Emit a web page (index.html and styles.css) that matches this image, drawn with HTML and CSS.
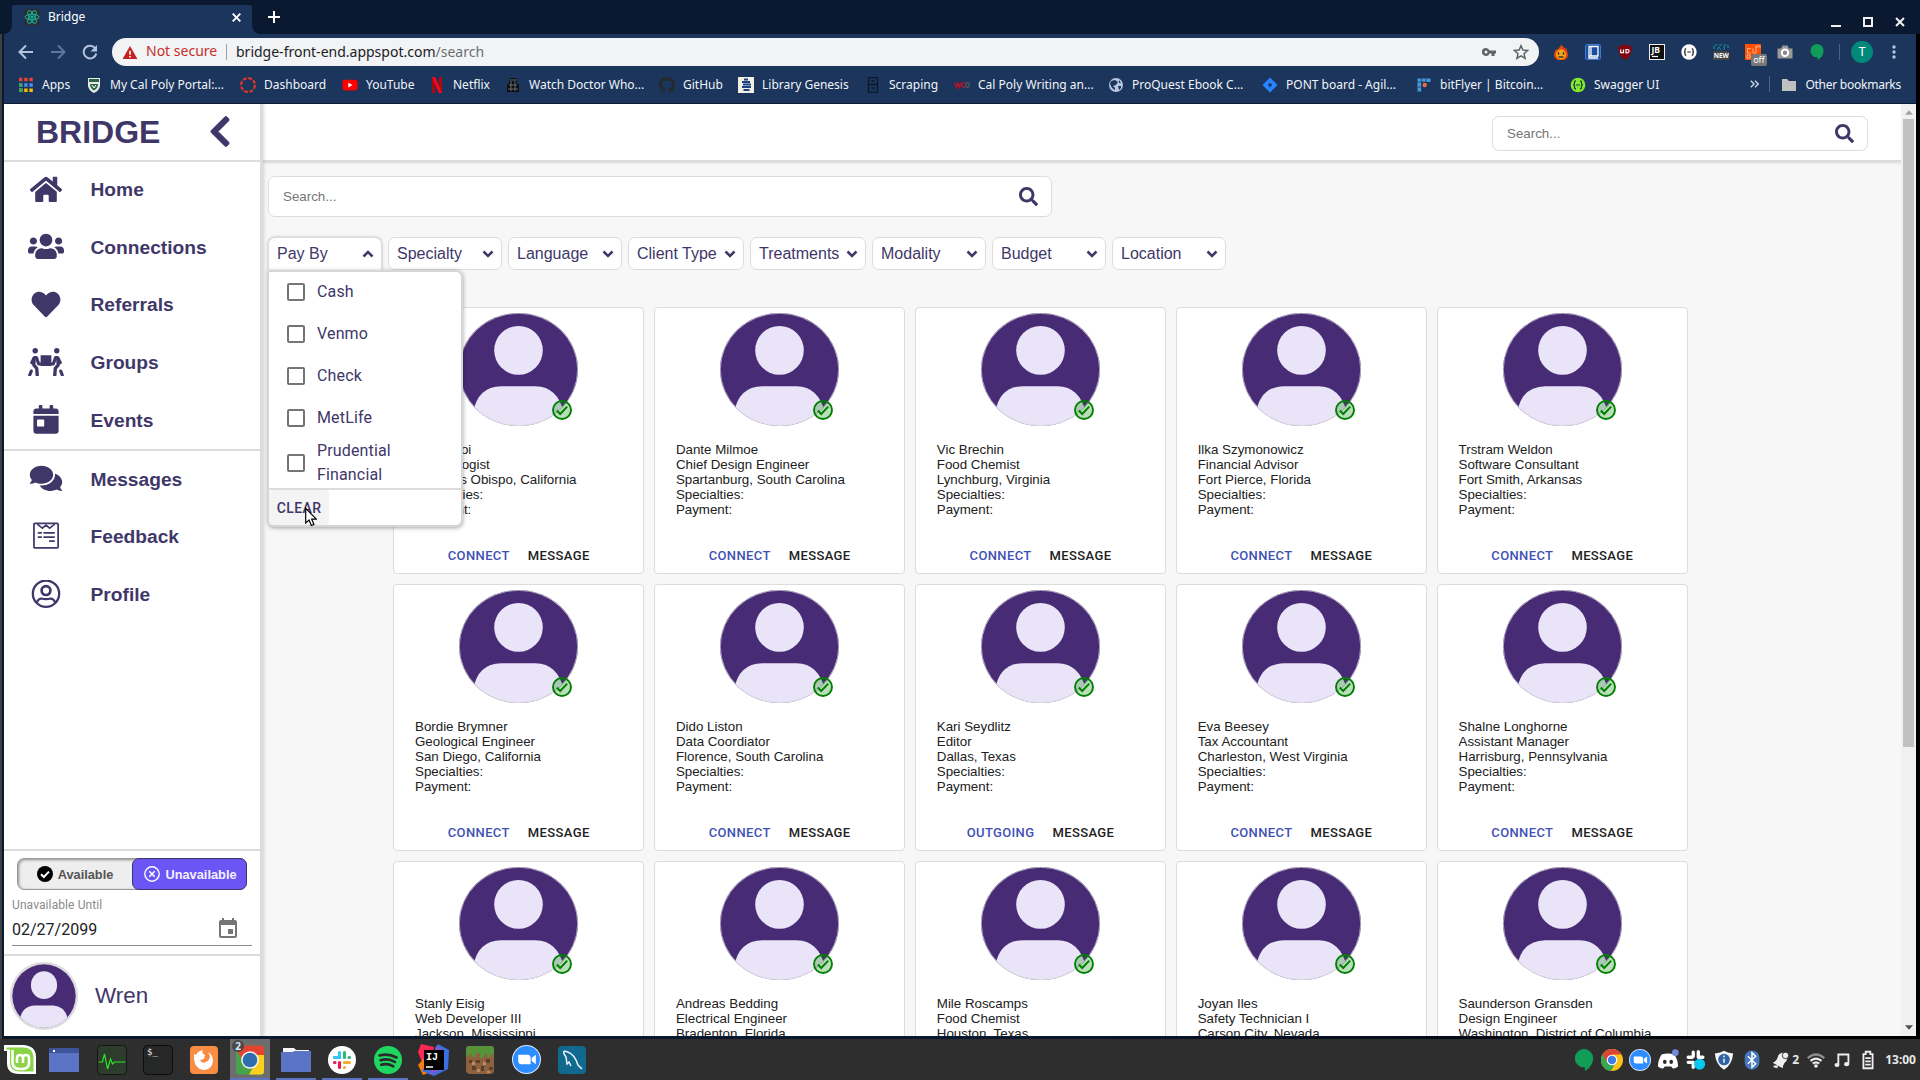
FILE: index.html
```html
<!DOCTYPE html>
<html lang="en">
<head>
<meta charset="utf-8">
<title>Bridge</title>
<link rel="stylesheet" href="styles.css">
</head>
<body>
<svg class="defs" width="0" height="0">
  <symbol id="avatar" viewBox="0 0 118 112" preserveAspectRatio="none">
    <clipPath id="avatar-clip"><ellipse cx="59" cy="56" rx="59" ry="56"/></clipPath>
    <g clip-path="url(#avatar-clip)">
      <rect width="118" height="112" fill="#482b75"/>
      <ellipse cx="59" cy="37" rx="24.1" ry="24.2" fill="#e9e4f8"/>
      <path d="M14 112V99Q18 73 42 72.500H76Q98 73 104 99V112Z" fill="#e9e4f8"/>
    </g>
    <ellipse cx="59" cy="56" rx="58.700" ry="55.700" fill="none" stroke="#d8d8dc" stroke-width=".7"/>
  </symbol>
  <symbol id="ok" viewBox="0 0 20 20"><circle cx="10" cy="10" r="9" fill="#008000" fill-opacity=".27" stroke="#008000" stroke-width="1.9"/><path d="M4.800 10.500l3.400 3.500 7-7.400" fill="none" stroke="#008000" stroke-width="2"/></symbol>
  <symbol id="search" viewBox="0 0 512 512"><path fill="#403769" d="M505 442.700L405.300 343c-4.500-4.500-10.600-7-17-7H372c27.600-35.300 44-79.700 44-128C416 93.100 322.900 0 208 0S0 93.100 0 208s93.100 208 208 208c48.300 0 92.700-16.400 128-44v16.300c0 6.400 2.500 12.500 7 17l99.700 99.700c9.400 9.400 24.600 9.400 33.900 0l28.300-28.300c9.400-9.400 9.400-24.600.1-34zM208 336c-70.700 0-128-57.200-128-128 0-70.700 57.200-128 128-128 70.700 0 128 57.200 128 128 0 70.700-57.200 128-128 128z"/></symbol>
  <symbol id="down" viewBox="0 0 12 8"><path d="M1.500 1.500L6 6l4.500-4.500" fill="none" stroke="#403769" stroke-width="2.500"/></symbol>
  <symbol id="chrome" viewBox="0 0 24 24">
    <circle cx="12" cy="12" r="12" fill="#fbc116"/>
    <path d="M12 12L1.600 6A12 12 0 0 0 11 24l5-9z" fill="#34a853"/>
    <path d="M12 12V6h10.400A12 12 0 0 0 1.600 6L7 15z" fill="#db4437"/>
    <circle cx="12" cy="12" r="5.800" fill="#fff"/><circle cx="12" cy="12" r="4.600" fill="#3f7ce8"/>
  </symbol>
  <symbol id="hang" viewBox="0 0 20 24"><path d="M10 0a10 10 0 0 1 10 10c0 6-4 11-9 14v-4h-1A10 10 0 0 1 10 0z" fill="#0f9d58"/></symbol>
  <symbol id="zoomcam" viewBox="0 0 28 28"><circle cx="14" cy="14" r="14" fill="#dcebff"/><circle cx="14" cy="14" r="13" fill="#2d8cff"/><path d="M6 9.500h9q3 0 3 3v6H9q-3 0-3-3zM19 12.500l4-3v9l-4-3z" fill="#fff"/></symbol>
</svg>

<div class="tabstrip">
  <div class="tab">
    <svg class="fav" viewBox="0 0 16 16"><rect width="16" height="16" fill="#2b2e36"/><g fill="none" stroke="#18b397" stroke-width="1"><ellipse cx="8" cy="8" rx="7" ry="2.700"/><ellipse cx="8" cy="8" rx="7" ry="2.700" transform="rotate(60 8 8)"/><ellipse cx="8" cy="8" rx="7" ry="2.700" transform="rotate(120 8 8)"/></g><circle cx="8" cy="8" r="1.500" fill="#18b397"/></svg>
    <span class="tab-title">Bridge</span>
    <svg class="tab-x" viewBox="0 0 9 9"><path d="M.7.7l7.600 7.600M8.300.7L.7 8.300" stroke="#fff" stroke-width="1.900"/></svg>
  </div>
  <svg class="newtab" viewBox="0 0 12 12"><path d="M6 0v12M0 6h12" stroke="#fff" stroke-width="2"/></svg>
  <div class="winctl">
    <svg viewBox="0 0 10 10"><path d="M0 9h10" stroke="#f0f0f0" stroke-width="2"/></svg>
    <svg viewBox="0 0 10 10"><path d="M1 1h8v8H1z" fill="none" stroke="#f0f0f0" stroke-width="2"/></svg>
    <svg viewBox="0 0 10 10"><path d="M1 1l8 8M9 1L1 9" stroke="#f0f0f0" stroke-width="2"/></svg>
  </div>
</div>

<div class="toolbar">
  <svg class="navbtn" viewBox="0 0 16 16"><path d="M15 8H2M8 1.500L1.500 8 8 14.500" fill="none" stroke="#b4c4de" stroke-width="2"/></svg>
  <svg class="navbtn" viewBox="0 0 16 16"><path d="M1 8h13M8 1.500L14.500 8 8 14.500" fill="none" stroke="#5e779f" stroke-width="2"/></svg>
  <svg class="navbtn" viewBox="0 0 16 16"><path d="M13.400 4.500A6.400 6.400 0 1 0 14.300 9.500" fill="none" stroke="#b4c4de" stroke-width="2"/><path d="M15 1v6.500H8.500z" fill="#b4c4de"/></svg>
  <div class="omnibox">
    <svg class="warn" viewBox="0 0 16 14"><path d="M8 0l8 14H0z" fill="#c5221f"/><path d="M8 5v4.500M8 10.700v1.700" stroke="#fff" stroke-width="1.700"/></svg>
    <span class="notsec">Not secure</span>
    <span class="url">bridge-front-end.appspot.com<i>/search</i></span>
    <svg class="key" viewBox="0 0 14 10"><path fill="#5f6368" fill-rule="evenodd" d="M4 1a4 4 0 1 0 3.600 5.500H9.500V9h3V6.500H14v-3H7.600A4 4 0 0 0 4 1zm0 2.500a1.500 1.500 0 1 1 0 3 1.500 1.500 0 0 1 0-3z"/></svg>
    <svg class="star" viewBox="0 0 16 16"><path d="M8 1.700l1.900 4.400 4.700.4-3.600 3.200 1.100 4.700L8 11.900l-4.100 2.500L5 9.700 1.400 6.500l4.700-.4z" fill="none" stroke="#5f6368" stroke-width="1.500"/></svg>
  </div>
  <div class="exts">
    <svg viewBox="0 0 16 16"><path d="M8 0c1 3 4 3 4 5l1.500-1c0 3 1.500 4 1.500 7a6 5 0 0 1-14 0c0-3 1.500-4 2-6l1.500 1C5 4 8 3 8 0z" fill="#e2440d"/><circle cx="8" cy="10.500" r="5" fill="#f7a418"/><path d="M5.500 8v3M10.500 8v3M5.500 13h5" stroke="#432" stroke-width="1.300"/></svg>
    <svg viewBox="0 0 16 16"><rect x=".5" y=".5" width="15" height="15" rx="1.500" fill="#1a4f9e" stroke="#3d7ad1"/><path d="M4 2.500h9v9.500H4zM4 12.500v1.500h9M6 3v9" fill="none" stroke="#fff" stroke-width="1.300"/></svg>
    <svg viewBox="0 0 16 16"><path d="M8 0q4 2.500 7 2.200Q15 12 8 16 1 12 1 2.200 4 2.500 8 0z" fill="#800610"/><path d="M3.700 5.500v3.200h2.800V5.500M9 5.500v3.300h1.200q2-.2 2-1.700t-2-1.600z" fill="none" stroke="#fff" stroke-width="1.200"/></svg>
    <svg viewBox="0 0 16 16"><rect x=".5" y=".5" width="15" height="15" fill="#111" stroke="#eee"/><text x="2.500" y="9" class="t-jb">JB</text><path d="M3 12.500h6" stroke="#fff" stroke-width="1.200"/></svg>
    <svg viewBox="0 0 16 16"><circle cx="8" cy="8" r="7.700" fill="#fff"/><path d="M5.200 4.500q-1.400 0-1.200 2T3 8q1.200 0 1 1.500t1.200 2M10.800 4.500q1.400 0 1.200 2T13 8q-1.200 0-1 1.500t-1.200 2M6.300 8h3.500" fill="none" stroke="#222" stroke-width="1.200"/></svg>
    <svg viewBox="0 0 16 16"><path d="M1 5V1h14v4" fill="none" stroke="#18919b" stroke-width="1.200" stroke-dasharray="3 1.500"/><path d="M4 6l2-3 2 3M11 2v4" stroke="#18919b" fill="none"/><rect y="7" width="16" height="9" fill="#444"/><text x=".7" y="14" class="t-new">NEW</text></svg>
    <span class="ext-cd"><svg viewBox="0 0 16 16"><rect width="16" height="16" fill="#ff5006"/><path d="M6 4.500H2.500v4.500H6M8 4.500v4.500h3V2M12 4V2h3v2M2 11h3v3H2z" fill="none" stroke="#f9b08a"/></svg><b>off</b></span>
    <svg viewBox="0 0 16 16"><path d="M.5 4.500h3.500l1.500-3h5l1.500 3h3.500V14.500H.5z" fill="#999"/><circle cx="8" cy="8.700" r="3.200" fill="#888" stroke="#fff" stroke-width="2"/></svg>
    <svg viewBox="0 0 20 24"><use href="#hang"/></svg>
  </div>
  <span class="tb-sep"></span>
  <span class="me">T</span>
  <svg class="dots" viewBox="0 0 4 14"><circle cx="2" cy="2" r="1.700" fill="#b4c4de"/><circle cx="2" cy="7" r="1.700" fill="#b4c4de"/><circle cx="2" cy="12" r="1.700" fill="#b4c4de"/></svg>
</div>

<div class="bookmarks">
  <div class="bm-list">
    <a><svg viewBox="0 0 16 16"><g stroke-width="3.400" stroke-dasharray="3.400 1.800"><path d="M1 2.500h14" stroke="#ea4335"/><path d="M1 8h14" stroke="#4a8cf4"/><path d="M1 13.300h14" stroke="#fbbc04"/></g><path d="M1 6.300h3.400v3.400H1zM1 11.600h3.400V15H1z" fill="#3aa757"/></svg>Apps</a>
    <a><svg viewBox="0 0 16 16"><path d="M2 1h12v8q-1 5-6 7-5-2-6-7z" fill="#e6ece5"/><path d="M3 2h10v3H3zM4 7h8q0 4-4 6.500Q4 11 4 7z" fill="#2d6447"/><path d="M6 8l2 3 2-3" stroke="#fff" fill="none"/></svg>My Cal Poly Portal:...</a>
    <a><svg viewBox="0 0 16 16"><circle cx="8" cy="8" r="6.900" fill="none" stroke="#e2372a" stroke-width="2.100" stroke-dasharray="3.900 1.520"/></svg>Dashboard</a>
    <a><svg viewBox="0 0 16 16"><rect x=".5" y="2.800" width="15" height="10.600" rx="2.400" fill="#f00"/><path d="M6.300 5.800v4.700L10.500 8.100z" fill="#fff"/></svg>YouTube</a>
    <a><svg viewBox="0 0 16 16"><path d="M3 0h3v16H3zM10 0h3v16h-3z" fill="#b1060f"/><path d="M3 0h3.200L13 16H9.800z" fill="#f00b18"/></svg>Netflix</a>
    <a><svg viewBox="0 0 16 16"><path d="M5 1h6l1 5 2 2v7H2V8l2-2z" fill="#0c0f14"/><path d="M5 3h6M4 8h8M3 12h10M6 4v10M10 4v10" stroke="#7d7e7c" stroke-width=".8"/></svg>Watch Doctor Who...</a>
    <a><svg viewBox="0 0 16 16"><path fill="#24292e" d="M8 0C3.580 0 0 3.580 0 8c0 3.540 2.290 6.530 5.470 7.590.4.070.55-.17.55-.38 0-.19-.01-.82-.01-1.490-2.010.37-2.530-.49-2.690-.94-.09-.23-.48-.94-.82-1.130-.28-.15-.68-.52-.01-.53.63-.01 1.080.58 1.230.82.72 1.210 1.870.87 2.330.66.070-.52.28-.87.51-1.070-1.780-.2-3.640-.89-3.640-3.950 0-.87.31-1.590.82-2.150-.08-.2-.36-1.020.08-2.120 0 0 .67-.21 2.200.82a7.600 7.600 0 0 1 4 0c1.530-1.040 2.200-.82 2.200-.82.44 1.100.16 1.920.08 2.120.51.56.82 1.270.82 2.150 0 3.070-1.870 3.750-3.650 3.950.29.25.54.73.54 1.480 0 1.070-.01 1.930-.01 2.200 0 .21.150.46.55.38A8 8 0 0 0 16 8c0-4.420-3.580-8-8-8z"/></svg>GitHub</a>
    <a><svg viewBox="0 0 16 16"><rect width="16" height="16" fill="#f1efe2"/><path d="M6 2.500h4M4 5h8M5 7.500h8M4 10h9M5.500 13h6" stroke="#1d4185" stroke-width="1.900"/></svg>Library Genesis</a>
    <a><svg viewBox="0 0 16 16"><path d="M3.500.7h9v14.600h-9zM3.500 7.500h9M6.500 4h3M6.500 11h3" fill="none" stroke="#0c172b" stroke-width="1.300"/></svg>Scraping</a>
    <a><svg viewBox="0 0 16 16"><path d="M.7 5.500L2.500 10.500 4 6l1.500 4.500L7 5.500M11 6q-3-1-3 2t3 2" fill="none" stroke="#b41328" stroke-width="1.400"/><ellipse cx="13.500" cy="8" rx="1.700" ry="2.200" fill="none" stroke="#4a5460" stroke-width="1.400"/></svg>Cal Poly Writing an...</a>
    <a><svg viewBox="0 0 16 16"><circle cx="8" cy="8" r="7" fill="#b8c6e2"/><path d="M3 4l4-1 3 2-2 3-3 1 2 2v2l-3-2-2-4zM10 9l3 0 0 2-2 2zM11 3l2 3h-2z" fill="#1b355c"/></svg>ProQuest Ebook C...</a>
    <a><svg viewBox="0 0 16 16"><path fill-rule="evenodd" d="M8 .5L15.500 8 8 15.500.5 8zM8 5.700L5.800 8 8 10.300 10.200 8z" fill="#2684ff"/></svg>PONT board - Agil...</a>
    <a><svg viewBox="0 0 16 16"><path d="M1.500 1.500h13v3.500h-9v9.500h-4z" fill="#4597da"/><path d="M1.500 5h9M5.500 1v13M10 1v4M1.500 10h4" stroke="#1b355c" stroke-width=".7"/><circle cx="8.700" cy="8" r="2.200" fill="#ee6a3c"/></svg>bitFlyer | Bitcoin...</a>
    <a><svg viewBox="0 0 16 16"><circle cx="8" cy="8" r="7.300" fill="#85ea2d"/><path d="M6 3.800q-1.700 0-1.500 2T3.200 8q1.500 0 1.300 2T6 12.200M10 3.800q1.700 0 1.500 2T12.800 8q-1.500 0-1.300 2T10 12.200M6 8h4" fill="none" stroke="#173647" stroke-width="1.200"/></svg>Swagger UI</a>
  </div>
  <svg class="more" viewBox="0 0 9 8"><path d="M.8.8L4 4 .8 7.200M5 .8L8.200 4 5 7.200" fill="none" stroke="#c9d3e5" stroke-width="1.400"/></svg>
  <span class="bm-sep"></span>
  <a class="other"><svg viewBox="0 0 16 16"><path d="M1 2h5l2 2h7v10H1z" fill="#c0c0c0"/></svg>Other bookmarks</a>
</div>

<div class="page">
  <aside class="sidebar">
    <div class="brand"><h1>BRIDGE</h1><svg viewBox="0 0 320 512"><path fill="#403769" stroke="#403769" stroke-width="14" d="M34.520 239.030L228.870 44.690c9.370-9.370 24.570-9.370 33.940 0l22.670 22.670c9.360 9.360 9.370 24.520.04 33.900L131.490 256l154.020 154.750c9.340 9.380 9.320 24.540-.04 33.900l-22.670 22.670c-9.370 9.370-24.570 9.370-33.940 0L34.520 272.970c-9.370-9.370-9.370-24.570 0-33.940z"/></svg></div>
    <nav class="nav top">
      <a><svg viewBox="0 0 576 512"><path d="M280.370 148.260L96 300.110V464a16 16 0 0 0 16 16l112.060-.29a16 16 0 0 0 15.920-16V368a16 16 0 0 1 16-16h64a16 16 0 0 1 16 16v95.640a16 16 0 0 0 16 16.050L464 480a16 16 0 0 0 16-16V300L295.670 148.260a12.190 12.190 0 0 0-15.300 0zM571.600 251.470L488 182.560V44.050a12 12 0 0 0-12-12h-56a12 12 0 0 0-12 12v72.610L318.470 43a48 48 0 0 0-61 0L4.340 251.470a12 12 0 0 0-1.600 16.900l25.500 31A12 12 0 0 0 45.150 301l235.220-193.740a12.190 12.190 0 0 1 15.300 0L530.900 301a12 12 0 0 0 16.900-1.600l25.500-31a12 12 0 0 0-1.700-16.930z"/></svg>Home</a>
      <a><svg viewBox="0 0 640 512"><path d="M96 224c35.300 0 64-28.700 64-64s-28.700-64-64-64-64 28.700-64 64 28.700 64 64 64zm448 0c35.300 0 64-28.700 64-64s-28.700-64-64-64-64 28.700-64 64 28.700 64 64 64zm32 32h-64c-17.600 0-33.500 7.100-45.100 18.600 40.300 22.100 68.900 62 75.100 109.400h66c17.700 0 32-14.300 32-32v-32c0-35.300-28.700-64-64-64zm-256 0c61.900 0 112-50.100 112-112S381.900 32 320 32 208 82.100 208 144s50.100 112 112 112zm76.800 32h-8.300c-20.800 10-43.900 16-68.500 16s-47.600-6-68.500-16h-8.300C179.600 288 128 339.600 128 403.200V432c0 26.500 21.500 48 48 48h288c26.500 0 48-21.500 48-48v-28.800c0-63.600-51.600-115.200-115.200-115.200zm-223.700-13.400C161.500 263.100 145.600 256 128 256H64c-35.300 0-64 28.700-64 64v32c0 17.700 14.300 32 32 32h65.900c6.300-47.400 34.900-87.300 75.200-109.400z"/></svg>Connections</a>
      <a><svg viewBox="0 0 512 512"><path d="M462.300 62.600C407.500 15.900 326 24.300 275.700 76.200L256 96.500l-19.700-20.300C186.100 24.300 104.500 15.900 49.700 62.600c-62.800 53.600-66.100 149.800-9.900 207.900l193.500 199.800c12.500 12.900 32.800 12.900 45.300 0l193.500-199.800c56.300-58.100 53-154.300-9.800-207.900z"/></svg>Referrals</a>
      <a><svg viewBox="0 0 640 512"><circle cx="128" cy="48" r="48"/><circle cx="512" cy="48" r="48"/><path d="M224 128h192v185q0 7-10 7H234q-10 0-10-7z"/><g fill="none" stroke="#403769" stroke-linecap="round" stroke-linejoin="round"><path d="M120 170l30 0 40 115h30M110 175l-44 85M520 170l-30 0-40 115h-30M530 175l44 85" stroke-width="56"/><path d="M110 185l-7 115 52 65 9 115M530 185l7 115-52 65-9 115" stroke-width="60"/><path d="M58 410l-27 70M582 410l27 70" stroke-width="56"/></g></svg>Groups</a>
      <a><svg viewBox="0 0 448 512"><path d="M0 464c0 26.500 21.500 48 48 48h352c26.500 0 48-21.500 48-48V192H0v272zm64-192c0-8.800 7.200-16 16-16h96c8.800 0 16 7.200 16 16v96c0 8.800-7.200 16-16 16H80c-8.800 0-16-7.200-16-16v-96zM400 64h-48V16c0-8.800-7.200-16-16-16h-32c-8.800 0-16 7.200-16 16v48H160V16c0-8.800-7.200-16-16-16h-32c-8.800 0-16 7.200-16 16v48H48C21.500 64 0 85.500 0 112v48h448v-48c0-26.500-21.500-48-48-48z"/></svg>Events</a>
    </nav>
    <nav class="nav">
      <a><svg viewBox="0 0 576 512"><path d="M416 192c0-88.400-93.100-160-208-160S0 103.600 0 192c0 34.300 14.100 65.900 38 92-13.400 30.200-35.500 54.200-35.800 54.500-2.200 2.300-2.800 5.700-1.500 8.700S4.800 352 8 352c36.600 0 66.900-12.300 88.700-25 32.200 15.700 70.300 25 111.300 25 114.900 0 208-71.600 208-160zm122 220c23.900-26 38-57.700 38-92 0-66.900-53.500-124.200-129.300-148.100.9 6.600 1.300 13.300 1.300 20.100 0 105.900-107.700 192-240 192-10.800 0-21.300-.8-31.700-1.900C207.800 439.600 281.800 480 368 480c41 0 79.100-9.200 111.300-25 21.800 12.700 52.100 25 88.700 25 3.200 0 6.100-1.900 7.300-4.800 1.300-2.900.7-6.300-1.500-8.700-.3-.3-22.400-24.200-35.800-54.500z"/></svg>Messages</a>
      <a><svg viewBox="0 0 28 28"><g fill="none" stroke="#403769" stroke-width="1.700"><rect x="2.300" y="1.300" width="23.500" height="23.800" rx="1"/><path d="M5.500 2l5 4L14 3l3.500 3 5-4" stroke-width="1.500"/><path d="M6 10.600h4M11.500 10.600h11M6 14.600h4M11.500 14.600h11M17 18.700h5.500"/></g></svg>Feedback</a>
      <a><svg viewBox="0 0 28 28"><g fill="none" stroke="#403769" stroke-width="2.200"><circle cx="14" cy="13.300" r="12.800"/><circle cx="14" cy="10.300" r="4.300" stroke-width="2.600"/><path d="M5 22q1.500-4 4.500-4 4.500 1.200 9 0 3 0 4.500 4"/></g></svg>Profile</a>
    </nav>
    <div class="status">
      <div class="toggle">
        <button class="avail"><svg viewBox="0 0 16 16"><circle cx="8" cy="8" r="8" fill="#000"/><path d="M4 8.300l2.800 2.700 5.200-5.400" fill="none" stroke="#fff" stroke-width="2"/></svg>Available</button>
        <button class="unavail"><svg viewBox="0 0 16 16"><circle cx="8" cy="8" r="7.200" fill="none" stroke="#fff" stroke-width="1.400"/><path d="M5.300 5.300l5.400 5.400M10.700 5.300l-5.400 5.400" stroke="#fff" stroke-width="1.600"/></svg>Unavailable</button>
      </div>
      <div class="until">Unavailable Until</div>
      <div class="date"><span>02/27/2099</span><svg viewBox="0 0 24 24"><path fill="#757575" d="M17 12h-5v5h5v-5zM16 1v2H8V1H6v2H5c-1.110 0-1.990.9-1.990 2L3 19c0 1.100.89 2 2 2h14c1.100 0 2-.9 2-2V5c0-1.100-.9-2-2-2h-1V1h-2zm3 18H5V8h14v11z"/></svg></div>
    </div>
    <div class="user"><span class="uava"><svg viewBox="0 0 118 112" preserveAspectRatio="none"><use href="#avatar"/></svg></span>Wren</div>
  </aside>

  <main class="main">
    <header class="topbar"><div class="searchbox small"><span>Search...</span><svg><use href="#search"/></svg></div></header>
    <div class="content">
      <div class="searchbox"><span>Search...</span><svg><use href="#search"/></svg></div>
      <div class="filters">
        <div class="filter open">Pay By<svg><use href="#down"/></svg>
          <div class="menu">
            <label><i></i>Cash</label><label><i></i>Venmo</label><label><i></i>Check</label><label><i></i>MetLife</label><label class="two"><i></i>Prudential Financial</label>
            <div class="menu-foot"><button>CLEAR</button></div>
          </div>
        </div>
        <div class="filter">Specialty<svg><use href="#down"/></svg></div>
        <div class="filter">Language<svg><use href="#down"/></svg></div>
        <div class="filter wide">Client Type<svg><use href="#down"/></svg></div>
        <div class="filter wide">Treatments<svg><use href="#down"/></svg></div>
        <div class="filter">Modality<svg><use href="#down"/></svg></div>
        <div class="filter">Budget<svg><use href="#down"/></svg></div>
        <div class="filter">Location<svg><use href="#down"/></svg></div>
      </div>
      <div class="cards">
        <article class="card"><div class="pic"><svg class="av"><use href="#avatar"/></svg><svg class="ok"><use href="#ok"/></svg></div><p>Diana Loi<br>Psychologist<br>San Luis Obispo, California<br>Specialties:<br>Payment:</p><div class="acts"><b>CONNECT</b><span>MESSAGE</span></div></article>
        <article class="card"><div class="pic"><svg class="av"><use href="#avatar"/></svg><svg class="ok"><use href="#ok"/></svg></div><p>Dante Milmoe<br>Chief Design Engineer<br>Spartanburg, South Carolina<br>Specialties:<br>Payment:</p><div class="acts"><b>CONNECT</b><span>MESSAGE</span></div></article>
        <article class="card"><div class="pic"><svg class="av"><use href="#avatar"/></svg><svg class="ok"><use href="#ok"/></svg></div><p>Vic Brechin<br>Food Chemist<br>Lynchburg, Virginia<br>Specialties:<br>Payment:</p><div class="acts"><b>CONNECT</b><span>MESSAGE</span></div></article>
        <article class="card"><div class="pic"><svg class="av"><use href="#avatar"/></svg><svg class="ok"><use href="#ok"/></svg></div><p>Ilka Szymonowicz<br>Financial Advisor<br>Fort Pierce, Florida<br>Specialties:<br>Payment:</p><div class="acts"><b>CONNECT</b><span>MESSAGE</span></div></article>
        <article class="card"><div class="pic"><svg class="av"><use href="#avatar"/></svg><svg class="ok"><use href="#ok"/></svg></div><p>Trstram Weldon<br>Software Consultant<br>Fort Smith, Arkansas<br>Specialties:<br>Payment:</p><div class="acts"><b>CONNECT</b><span>MESSAGE</span></div></article>
        <article class="card"><div class="pic"><svg class="av"><use href="#avatar"/></svg><svg class="ok"><use href="#ok"/></svg></div><p>Bordie Brymner<br>Geological Engineer<br>San Diego, California<br>Specialties:<br>Payment:</p><div class="acts"><b>CONNECT</b><span>MESSAGE</span></div></article>
        <article class="card"><div class="pic"><svg class="av"><use href="#avatar"/></svg><svg class="ok"><use href="#ok"/></svg></div><p>Dido Liston<br>Data Coordiator<br>Florence, South Carolina<br>Specialties:<br>Payment:</p><div class="acts"><b>CONNECT</b><span>MESSAGE</span></div></article>
        <article class="card"><div class="pic"><svg class="av"><use href="#avatar"/></svg><svg class="ok"><use href="#ok"/></svg></div><p>Kari Seydlitz<br>Editor<br>Dallas, Texas<br>Specialties:<br>Payment:</p><div class="acts"><b>OUTGOING</b><span>MESSAGE</span></div></article>
        <article class="card"><div class="pic"><svg class="av"><use href="#avatar"/></svg><svg class="ok"><use href="#ok"/></svg></div><p>Eva Beesey<br>Tax Accountant<br>Charleston, West Virginia<br>Specialties:<br>Payment:</p><div class="acts"><b>CONNECT</b><span>MESSAGE</span></div></article>
        <article class="card"><div class="pic"><svg class="av"><use href="#avatar"/></svg><svg class="ok"><use href="#ok"/></svg></div><p>Shalne Longhorne<br>Assistant Manager<br>Harrisburg, Pennsylvania<br>Specialties:<br>Payment:</p><div class="acts"><b>CONNECT</b><span>MESSAGE</span></div></article>
        <article class="card"><div class="pic"><svg class="av"><use href="#avatar"/></svg><svg class="ok"><use href="#ok"/></svg></div><p>Stanly Eisig<br>Web Developer III<br>Jackson, Mississippi</p></article>
        <article class="card"><div class="pic"><svg class="av"><use href="#avatar"/></svg><svg class="ok"><use href="#ok"/></svg></div><p>Andreas Bedding<br>Electrical Engineer<br>Bradenton, Florida</p></article>
        <article class="card"><div class="pic"><svg class="av"><use href="#avatar"/></svg><svg class="ok"><use href="#ok"/></svg></div><p>Mile Roscamps<br>Food Chemist<br>Houston, Texas</p></article>
        <article class="card"><div class="pic"><svg class="av"><use href="#avatar"/></svg><svg class="ok"><use href="#ok"/></svg></div><p>Joyan Iles<br>Safety Technician I<br>Carson City, Nevada</p></article>
        <article class="card"><div class="pic"><svg class="av"><use href="#avatar"/></svg><svg class="ok"><use href="#ok"/></svg></div><p>Saunderson Gransden<br>Design Engineer<br>Washington, District of Columbia</p></article>
      </div>
    </div>
  </main>
  <div class="scroll"><svg viewBox="0 0 9 5"><path d="M0 5L4.500 0 9 5z" fill="#a3a3a3"/></svg><span></span><svg class="dn" viewBox="0 0 9 5"><path d="M0 0l4.500 5L9 0z" fill="#505050"/></svg></div>
</div>

<div class="taskbar">
  <div class="apps">
    <span><svg viewBox="0 0 32 32"><path d="M0 1h20q12 1 12 12v17H15Q3 30 3 19V7H0z" fill="#fff"/><path d="M2.500 3.500h17q10 .5 10 10v14H15Q6 27 6 19V5.500H2.500z" fill="#8bd346"/><path d="M8.500 6v12q0 7 7 7H19q6-.5 6-6v-5q-.2-3-3-3t-3 3v5M19 14q-.2-3-3-3t-3 3v5" fill="none" stroke="#fff" stroke-width="2.600"/></svg></span>
    <span class="files"><svg viewBox="0 0 32 32"><rect x="1" y="4" width="30" height="24" fill="#5b74c5"/><rect x="1" y="4" width="30" height="5" fill="#3d549b"/><rect x="5" y="6" width="2" height="2" fill="#fff"/></svg></span>
    <span><svg viewBox="0 0 32 32"><rect x="1.500" y="1.500" width="29" height="29" rx="4" fill="#2d3c2b" stroke="#141814"/><path d="M2.500 18h4l2-8 3 15 3-10 2 5 2-2h11" fill="none" stroke="#2ee52e" stroke-width="1.200"/></svg></span>
    <span><svg viewBox="0 0 32 32"><rect x="1.500" y="1.500" width="29" height="29" rx="4" fill="#262828" stroke="#0c0c0c"/><text x="5" y="11" class="t-term">$_</text></svg></span>
    <span><svg viewBox="0 0 32 32"><rect x="2" y="2" width="28" height="28" rx="4" fill="#f88c42"/><path d="M6 10l2 1q2-4 7-5-2 3 2 5l-1 4-4 1q2 4 6 2t4-6l-2-4q5 3 5 9-1 9-10 9Q5 24 6 10z" fill="#fff"/></svg></span>
    <span class="on run"><svg viewBox="0 0 32 32"><path d="M5 1.500h22a3 3 0 0 1 3 3v23a3 3 0 0 1-3 3H5a3 3 0 0 1-3-3v-23a3 3 0 0 1 3-3z" fill="#48a24a"/><path d="M2 5q0-3.500 3-3.500h22q3 0 3 3.500v6H16l-6 8-8-14z" fill="#e44332"/><path d="M30 11v16q0 3.500-3 3.500H15l8-14V11z" fill="#fcd11c"/><circle cx="16" cy="16" r="8.800" fill="#f2f2f2"/><circle cx="16" cy="16" r="7.300" fill="#2e6eae"/></svg><em>2</em></span>
    <span class="run"><svg viewBox="0 0 32 32"><path d="M3 4h11l2 2h13v5H3z" fill="#f7f7f7"/><path d="M1 8h11l3-1h16v21H1z" fill="#5b74c5"/></svg></span>
    <span class="run"><svg viewBox="0 0 32 32"><circle cx="16" cy="16" r="14" fill="#fff"/><g stroke-width="3.200" stroke-linecap="round"><path d="M13.500 8.500v5M8.500 13.500h0" stroke="#36c5f0"/><path d="M8.500 13.500h5" stroke="#36c5f0"/><path d="M18.500 8.500v5M23.500 13.500h-.5" stroke="#2eb67d"/><path d="M18.500 18.500h5M18.500 23.500v0" stroke="#ecb22e"/><path d="M13.500 18.500v5M8.500 18.500h.5" stroke="#e01e5a"/></g></svg></span>
    <span class="run"><svg viewBox="0 0 32 32"><circle cx="16" cy="16" r="14" fill="#1ed760"/><path d="M7.500 11.500q9-2.500 17 2M8.500 16.200q8-2.200 14.500 1.800M9.300 20.800q6.500-1.800 12 1.500" fill="none" stroke="#2b2b2b" stroke-width="2.600" stroke-linecap="round"/></svg></span>
    <span><svg viewBox="0 0 32 32"><path d="M3 0l13 3-2 9L4 18 0 8z" fill="#fe2857"/><path d="M0 21l8-9 8 15-11 4z" fill="#f97a12"/><path d="M20 0l11 6-1 19-14 7-12-5z" fill="#3b6fe4"/><path d="M18 2l8 4-4 20-10 5z" fill="#8756c8"/><rect x="6" y="6" width="20" height="20" fill="#000"/><text x="8" y="16" class="t-ij">IJ</text><path d="M8 23h7" stroke="#fff" stroke-width="1.500"/></svg></span>
    <span><svg viewBox="0 0 32 32"><rect x="2" y="2" width="28" height="28" rx="4" fill="#8c6240"/><path d="M2 5q0-3 3-3h22q3 0 3 3v5h-3v3h-4v-3h-3v4h-4v-5h-4v4H8v-3H5v2H2z" fill="#569238"/><path d="M5 16h3v3H5zM12 16h4v3h-4zM22 15h4v4h-4zM8 22h4v4H8zM17 22h3v5h-3zM25 23h4v3h-4z" fill="#5e3e27"/><path d="M8 18h3v3H8zM19 18h3v3h-3zM13 25h3v3h-3zM23 27h3v2h-3z" fill="#bb8b66"/></svg></span>
    <span><svg viewBox="0 0 28 28" class="zoomapp"><use href="#zoomcam"/></svg></span>
    <span><svg viewBox="0 0 32 32"><rect x="2" y="2" width="28" height="28" rx="4" fill="#12698f"/><path d="M8 7q8 1 12 9l2 5 4 4M8 7q-1 2 2 6l1 7 2-2 2 4" fill="none" stroke="#e8f4fa" stroke-width="1.500"/></svg></span>
  </div>
  <div class="tray">
    <svg viewBox="0 0 20 24"><use href="#hang"/></svg>
    <svg viewBox="0 0 24 24"><use href="#chrome"/></svg>
    <svg viewBox="0 0 28 28"><use href="#zoomcam"/></svg>
    <svg viewBox="0 0 24 24"><path d="M5 6q7-2 14 0 4 6 4 13-4 3-6 2l-1.500-2h-7L7 21q-2 1-6-2Q1 12 5 6z" fill="#fff"/><ellipse cx="8.500" cy="14" rx="2" ry="2.400" fill="#2d2d2d"/><ellipse cx="15.500" cy="14" rx="2" ry="2.400" fill="#2d2d2d"/><circle cx="20" cy="4" r="3.600" fill="#7289da"/></svg>
    <svg viewBox="0 0 24 24"><g stroke="#fff" stroke-width="3.600" stroke-linecap="round"><path d="M9 3.500v4.500M3.500 9h4.500M14.500 3v6M14.500 9h5M3.500 14.500h5.500M9 15v5"/></g><circle cx="16" cy="16.500" r="6" fill="#00c8ee"/></svg>
    <svg viewBox="0 0 24 24"><path d="M12 2q5 3 10 2.500Q21 17 12 22.500 3 17 2 4.500 7 5 12 2z" fill="#f4f4f4"/><circle cx="12" cy="11.500" r="6.300" fill="#2e64a5"/><path d="M12 10.500v4.500M12 7v2" stroke="#dfe8f3" stroke-width="1.800"/></svg>
    <svg viewBox="0 0 24 24"><rect x="4" y="1.500" width="16" height="21" rx="8" fill="#4579bd"/><path d="M7.500 8l8.500 8-4 4V4l4 4-8.500 8" fill="none" stroke="#fff" stroke-width="1.600"/></svg>
    <svg viewBox="0 0 24 24"><path d="M4 15q5-2 6-8 4-5 8-1 4 5-1 9-2 3-2 6zM5 18h5l-1 3-4-1z" fill="#eee"/><circle cx="18" cy="7" r="3.500" fill="#eee" stroke="#2d2d2d"/></svg>
    <span class="n2">2</span>
    <svg viewBox="0 0 24 24"><g fill="none" stroke="#eee" stroke-width="2.400"><path d="M3 10q9-8 18 0" opacity=".5"/><path d="M6 13q6-5 12 0M8.500 16q3.500-3 7 0"/></g><circle cx="12" cy="18.500" r="2" fill="#eee"/></svg>
    <svg class="tight" viewBox="0 0 24 24"><path d="M8 17V6h11v10" fill="none" stroke="#eee" stroke-width="2"/><ellipse cx="6.500" cy="17.500" rx="2.700" ry="2.200" fill="#eee"/><ellipse cx="17" cy="16.500" rx="2.700" ry="2.200" fill="#eee"/></svg>
    <svg class="tight" viewBox="0 0 24 24"><path d="M7 5.500h2.500V3h5v2.500H17V21H7z" fill="none" stroke="#eee" stroke-width="2"/><path d="M9 10h6M9 13.500h6M9 17h6" stroke="#eee" stroke-width="1.800"/></svg>
    <span class="clock">13:00</span>
  </div>
</div>
<svg class="cursor" viewBox="0 0 12 19"><path d="M.7.9v14.600l3.400-3 2.200 5.500 2.600-1-2.200-5.300h4.600z" fill="#fff" stroke="#000" stroke-width="1.200"/></svg>
</body>
</html>
```
FILE: styles.css
```css
* { box-sizing: border-box; }
body {
  margin: 0; width: 1920px; height: 1080px; overflow: hidden;
  background: linear-gradient(90deg, #3c4043 2px, #0a1930 2px, #0a1930 1000px, #000 1900px);
  display: flex; flex-direction: column;
  font-family: "Liberation Sans", Arial, sans-serif;
}
svg { display: block; flex: none; }
.defs { position: absolute; }
button { font-family: inherit; margin: 0; }

/* browser chrome */
.tabstrip { height: 34px; flex: none; background: #0a1930; display: flex; align-items: flex-end; padding-left: 12px; }
.tab {
  width: 240px; height: 29px; background: #1b355c; border-radius: 2px 2px 0 0; position: relative;
  display: flex; align-items: center; padding: 0 11px 5px 12px; color: #fff;
  font: 12px "Noto Sans", sans-serif;
}
.tab::before, .tab::after { content: ""; position: absolute; bottom: 0; width: 8px; height: 8px; }
.tab::before { left: -8px; background: radial-gradient(circle at 0 0, transparent 7.500px, #1b355c 8px); }
.tab::after { right: -8px; background: radial-gradient(circle at 100% 0, transparent 7.500px, #1b355c 8px); }
.fav { width: 16px; height: 16px; }
.tab-title { margin-left: 8px; flex: 1; padding-bottom: 2px; }
.tab-x { width: 9px; height: 9px; }
.newtab { width: 12px; height: 12px; margin: 0 0 11px 16px; }
.winctl { margin-left: auto; display: flex; gap: 22px; padding: 0 15px 7px 0; }
.winctl svg { width: 10px; height: 10px; }

.toolbar { height: 36px; flex: none; background: #1b355c; border-left: 2px solid #0a1930; margin: 0 4px 0 2px; display: flex; align-items: center; padding: 0 0 0 14px; }
.navbtn { width: 16px; height: 16px; margin-right: 16px; }
.omnibox { width: 1427px; height: 28px; margin-left: -2px; border-radius: 14px; background: #f1f3f4; display: flex; align-items: center; padding: 0 10px; font: 14px "Noto Sans", sans-serif; }
.warn { width: 16px; height: 13px; }
.notsec { color: #c5302a; margin-left: 8px; width: 81px; border-right: 1px solid #9aa0a6; line-height: 14px; padding-bottom: 2px; white-space: nowrap; }
.url { margin-left: 9px; color: #202124; flex: 1; padding-bottom: 2px; }
.url i { font-style: normal; color: #6b6f74; }
.key { width: 14px; height: 10px; margin-right: 17px; }
.star { width: 16px; height: 16px; }
.exts { display: flex; gap: 16px; margin-left: 14px; align-items: center; }
.exts svg { width: 16px; height: 16px; }
.ext-cd { position: relative; width: 16px; height: 16px; }
.ext-cd b { position: absolute; left: 6px; top: 10px; width: 16px; height: 12px; border-radius: 2px; background: #777; color: #fff; font: 9px/11px "Noto Sans", sans-serif; text-align: center; }
.t-jb { font: bold 8.500px "Noto Sans", sans-serif; fill: #fff; }
.t-new { font: bold 6.500px "Noto Sans", sans-serif; fill: #fff; }
.tb-sep { width: 1px; height: 16px; background: #4a6285; margin: 0 11px 0 14px; }
.me { width: 22px; height: 22px; border-radius: 50%; background: #00897b; color: #fff; font: 12px/22px Roboto, sans-serif; text-align: center; }
.dots { width: 4px; height: 14px; margin-left: 19px; }

.bookmarks { height: 34px; flex: none; background: #1b355c; border-left: 2px solid #0a1930; border-bottom: 1px solid #0e1d36; margin: 0 4px 0 2px; display: flex; align-items: center; padding: 0 15px 5px 14px; font: 12px "Noto Sans", sans-serif; color: #f1f4f9; }
.bm-list { display: grid; grid-template-columns: 68px 154px 102px 87px 76px 154px 79px 127px 89px 154px 154px 154px 154px 154px; white-space: nowrap; margin-right: -20px; }
.bookmarks a { display: flex; align-items: center; gap: 8px; }
.bookmarks a svg { width: 16px; height: 16px; margin-top: 1px; }
.bookmarks .other { letter-spacing: -.25px; }
.more { width: 9px; height: 8px; margin-left: auto; }
.bm-sep { width: 1px; height: 16px; background: #4a6285; margin: 0 11px 0 10px; }

/* application */
.page { height: 932px; flex: none; margin: 0 4px 0 2px; border-left: 2px solid #0a1930; display: flex; background: #f7f7f7; }
.sidebar { width: 259px; flex: none; background: #fff; border-right: 3px solid #dcdcdc; box-shadow: 1px 0 3px rgba(0,0,0,.15); display: flex; flex-direction: column; color: #403769; position: relative; z-index: 1; }
.brand { height: 58px; border-bottom: 2px solid #dcdcdc; display: flex; align-items: center; padding-left: 32px; }
.brand h1 { margin: 0; font-size: 32px; line-height: 36px; width: 170px; }
.brand svg { width: 22px; height: 35px; margin: -2px 0 0 3px; }
.nav a { height: 57.600px; display: flex; align-items: center; font-weight: bold; font-size: 19.200px; padding-left: 24px; }
.nav.top { border-bottom: 2px solid #dcdcdc; height: 289.600px; margin-top: -.6px; }
.nav svg { height: 28.800px; width: 36px; margin-right: 26.500px; fill: #403769; margin-top: -2px; }
.status { margin-top: auto; height: 107px; border-top: 2px solid #dcdcdc; border-bottom: 2px solid #dcdcdc; padding: 7px 8px 0; }
.toggle { margin: 0 5px; display: flex; width: 230px; height: 32px; background: #eee; border: 1px solid #999; border-radius: 7px; box-shadow: inset 1px 1px 3px rgba(0,0,0,.4); }
.toggle button { display: flex; align-items: center; justify-content: center; gap: 5px; font-weight: bold; font-size: 12.800px; padding: 0; border: 0; background: none; }
.toggle svg { width: 16px; height: 16px; }
.toggle .avail { width: 115px; color: #555; padding-right: 1px; }
.toggle .unavail { width: 115px; margin: -1px; background: #6b55f5; color: #f4f1ff; border: 1px solid #403769; border-radius: 7px; padding-left: 2px; }
.until { font: 12px/14px Roboto, sans-serif; letter-spacing: .1px; color: #8a8a8a; margin-top: 8px; }
.date { height: 34px; border-bottom: 1px solid #8c8c8c; width: 240px; display: flex; align-items: center; justify-content: space-between; padding: 1px 12px 0 0; font: 16px Roboto, sans-serif; color: #212121; }
.date svg { width: 24px; height: 24px; }
.user { height: 80px; display: flex; align-items: center; font-size: 22.400px; padding: 0 0 0 6px; }
.uava { width: 68px; height: 68px; border: 2px solid #dcdcdc; border-radius: 50%; overflow: hidden; margin-right: 17px; }
.uava svg { width: 64px; height: 64px; }

.main { flex: 1; overflow: hidden; }
.topbar { height: 58px; background: #fff; border-bottom: 2px solid #dcdcdc; box-shadow: 0 1px 2px rgba(0,0,0,.12); display: flex; justify-content: flex-end; align-items: flex-start; padding: 12px 33px 0 0; position: relative; }
.searchbox { width: 784px; height: 41px; background: #fff; border: 1px solid #dcdcdc; border-radius: 7px; display: flex; align-items: center; justify-content: space-between; padding: 0 13px 0 14px; font-size: 13.333px; color: #757575; }
.searchbox svg { width: 19px; height: 19px; margin-top: -1px; }
.searchbox.small { width: 376px; height: 35px; }
.content { padding: 14px 0 0 5px; }
.filters { display: flex; gap: 6px; margin-top: 20px; }
.filter { width: 114px; height: 33px; background: #fff; border: 1px solid #dcdcdc; border-radius: 7px; display: flex; align-items: center; justify-content: space-between; padding: 0 7px 0 8px; font-size: 16px; color: #403769; white-space: nowrap; position: relative; }
.filter > svg { width: 12px; height: 8px; }
.filter.wide { width: 116px; }
.filter.open { border-radius: 7px 7px 0 0; border-bottom-color: #fff; box-shadow: 0 0 3px rgba(0,0,0,.25); }
.filter.open > svg { transform: rotate(180deg); }
.menu { position: absolute; left: -1px; top: 32px; width: 195px; height: 257px; background: #fff; border: 2px solid #d6d6d6; border-left-width: 1px; border-radius: 0 7px 7px 7px; box-shadow: 0 1px 4px rgba(0,0,0,.35); z-index: 2; font: 16px/24px Roboto, sans-serif; letter-spacing: .15px; }
.menu label { display: flex; align-items: center; height: 42px; padding: 0 50px 2px 18px; white-space: normal; }
.menu i { width: 18px; height: 18px; border: 2px solid #757575; border-radius: 2px; margin-right: 12px; flex: none; }
.menu label.two { height: 48px; }
.menu-foot { border-top: 2px solid #dcdcdc; height: 37px; }
.menu-foot button { display: block; width: 60px; height: 35px; border: 0; border-radius: 4px; background: #f4f4f4; color: #403769; font: 500 14px Roboto, sans-serif; letter-spacing: .4px; padding: 0; }
.cards { display: grid; grid-template-columns: repeat(5, 251.400px); gap: 10px 9.500px; margin: 37px 0 0 125px; }
.card { height: 267px; background: #fff; border: 1px solid #dcdcdc; border-radius: 4px; padding: 5px 0 0; display: flex; flex-direction: column; }
.pic { width: 119px; height: 113px; margin: 0 auto; position: relative; }
.av { width: 119px; height: 113px; }
.ok { position: absolute; width: 20px; height: 20px; right: 6px; bottom: 6px; }
.card p { margin: 16px 0 0 21px; font-size: 13.333px; line-height: 15px; color: #212121; white-space: nowrap; }
.acts { display: flex; justify-content: center; gap: 18px; font: 500 13px/16px Roboto, sans-serif; letter-spacing: .37px; margin-top: 31px; color: #212121; }
.acts b { font-weight: 500; color: #3f51b5; }
.scroll { width: 15px; flex: none; background: #f1f1f1; display: flex; flex-direction: column; align-items: center; padding: 6px 0; }
.scroll svg { width: 8px; height: 5px; }
.scroll span { width: 11px; height: 628px; background: #c1c1c1; margin: 4px 0 auto; }

/* desktop panel */
.taskbar { height: 41px; margin-top: 3px; flex: none; background: #2e2e2e; display: flex; justify-content: space-between; }
.apps { display: flex; gap: 6px; }
.apps span { width: 40px; height: 41px; display: flex; align-items: center; justify-content: center; position: relative; }
.apps svg { width: 32px; height: 32px; }
.apps .files { padding-right: 4px; }
.apps .zoomapp { width: 29px; height: 29px; }
.apps .run { border-bottom: 2px solid #5c74c4; padding-top: 2px; }
.apps .on { background: #6d6d6d; }
.apps em { position: absolute; left: 2px; top: 1px; width: 12px; height: 12px; border-radius: 6px; background: #484848; color: #d5e4fa; font: bold 10px/12px "Noto Sans", sans-serif; text-align: center; }
.t-term { font: 9px "DejaVu Sans Mono", monospace; fill: #eee; }
.t-ij { font: bold 10px "Liberation Mono", monospace; fill: #fff; }
.tray { display: flex; align-items: center; gap: 4px; padding-right: 4px; }
.tray svg { width: 24px; height: 22px; }
.tray .tight { margin-left: -2px; }
.n2, .clock { font: bold 12px "Noto Sans", sans-serif; color: #e8e8e8; }
.n2 { margin-left: -4px; width: 8px; }
.clock { margin-left: 1px; }
.cursor { position: absolute; left: 305px; top: 507px; width: 12px; height: 20px; z-index: 5; }
```
